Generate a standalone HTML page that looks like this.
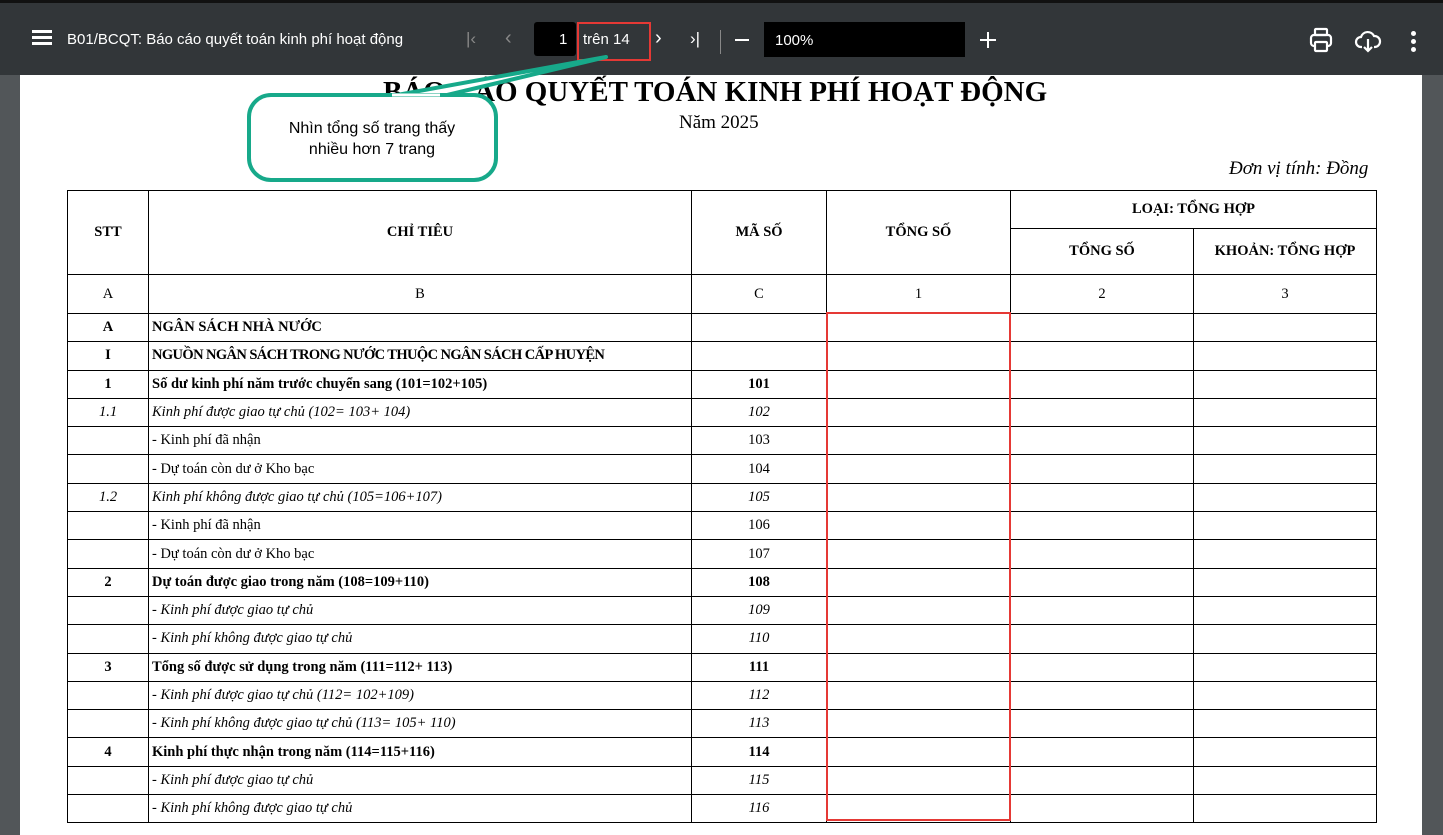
<!DOCTYPE html>
<html><head><meta charset="utf-8"><style>
*{margin:0;padding:0;box-sizing:border-box}
body{width:1443px;height:823px;overflow:hidden;background:#525659;position:relative;font-family:"Liberation Serif",serif}
#bar{position:absolute;left:0;top:0;width:1443px;height:75px;background:#323639;border-top:3px solid #111;color:#fff;font-family:"Liberation Sans",sans-serif}
#page{position:absolute;left:20px;top:75px;width:1402px;height:760px;background:#fff}
.t{position:absolute;white-space:nowrap}
table{position:absolute;left:67px;top:190px;border-collapse:collapse;font-size:14.5px}
td{border:1px solid #000;padding:0 3px;height:28.3px;white-space:nowrap}
.c{text-align:center}.b{font-weight:bold}.i{font-style:italic}
</style></head><body>
<div id="bar">
 <div class="t" style="left:32px;top:27px;width:20px;height:3px;background:#fff;box-shadow:0 6px 0 #fff,0 12px 0 #fff"></div>
 <div class="t" style="left:67px;top:28px;font-size:15px">B01/BCQT: Báo cáo quyết toán kinh phí hoạt động</div>
 <div class="t" style="left:466px;top:26px;font-size:17px;color:#888">|&lsaquo;</div>
 <div class="t" style="left:505px;top:24px;font-size:20px;color:#888">&lsaquo;</div>
 <div class="t" style="left:534px;top:19px;width:42px;height:34px;background:#000;border-radius:3px"></div>
 <div class="t" style="left:559px;top:28px;font-size:15px">1</div>
 <div class="t" style="left:583px;top:28px;font-size:15px">trên 14</div>
 <div class="t" style="left:577px;top:19px;width:74px;height:39px;border:2px solid #e53935"></div>
 <div class="t" style="left:655px;top:24px;font-size:20px">&rsaquo;</div>
 <div class="t" style="left:690px;top:26px;font-size:17px">&rsaquo;|</div>
 <div class="t" style="left:720px;top:27px;width:1px;height:24px;background:#888"></div>
 <div class="t" style="left:735px;top:36px;width:14px;height:2px;background:#fff"></div>
 <div class="t" style="left:764px;top:19px;width:201px;height:35px;background:#000"></div>
 <div class="t" style="left:775px;top:29px;font-size:15px">100%</div>
 <div class="t" style="left:980px;top:36px;width:16px;height:2px;background:#fff"></div>
 <div class="t" style="left:987px;top:29px;width:2px;height:16px;background:#fff"></div>
 <svg class="t" style="left:1309px;top:24px" width="24" height="28" viewBox="0 0 24 28" fill="none" stroke="#fff" stroke-width="2.2"><rect x="6" y="2" width="12" height="6" rx="1"/><rect x="2" y="8" width="20" height="11" rx="3"/><rect x="6" y="15" width="12" height="9" rx="1" fill="#323639"/></svg>
 <svg class="t" style="left:1354px;top:25px" width="28" height="26" viewBox="0 0 28 26" fill="none" stroke="#fff" stroke-width="2.2"><path d="M8 19H7a5 5 0 0 1 0-10 7 7 0 0 1 13-1 5 5 0 0 1 1 11h-1"/><path d="M14 11v12M10 19l4 4 4-4"/></svg>
 <div class="t" style="left:1411px;top:28px;width:5px;height:5px;border-radius:50%;background:#fff;box-shadow:0 8px 0 #fff,0 16px 0 #fff"></div>
</div>
<div id="page"></div>
<div class="t" style="left:383px;top:76px;font-size:29px;font-weight:bold">BÁO CÁO QUYẾT TOÁN KINH PHÍ HOẠT ĐỘNG</div>
<div class="t" style="left:679px;top:112px;font-size:19px">Năm 2025</div>
<div class="t" style="left:1229px;top:158px;font-size:19px;font-style:italic">Đơn vị tính: Đồng</div>
<table>
<colgroup><col style="width:81px"><col style="width:543px"><col style="width:135px"><col style="width:184px"><col style="width:183px"><col style="width:183px"></colgroup>
<tr><td rowspan="2" class="c b" style="height:84px">STT</td><td rowspan="2" class="c b">CHỈ TIÊU</td><td rowspan="2" class="c b">MÃ SỐ</td><td rowspan="2" class="c b">TỔNG SỐ</td><td colspan="2" class="c b" style="height:38px">LOẠI: TỔNG HỢP</td></tr>
<tr><td class="c b" style="height:46px">TỔNG SỐ</td><td class="c b">KHOẢN: TỔNG HỢP</td></tr>
<tr><td class="c" style="height:39px">A</td><td class="c">B</td><td class="c">C</td><td class="c">1</td><td class="c">2</td><td class="c">3</td></tr>
<tr class="b"><td class="c">A</td><td>NGÂN SÁCH NHÀ NƯỚC</td><td></td><td></td><td></td><td></td></tr>
<tr class="b"><td class="c">I</td><td style="letter-spacing:-0.6px">NGUỒN NGÂN SÁCH TRONG NƯỚC THUỘC NGÂN SÁCH CẤP HUYỆN</td><td></td><td></td><td></td><td></td></tr>
<tr class="b"><td class="c">1</td><td>Số dư kinh phí năm trước chuyển sang (101=102+105)</td><td class="c">101</td><td></td><td></td><td></td></tr>
<tr class="i"><td class="c">1.1</td><td>Kinh phí được giao tự chủ (102= 103+ 104)</td><td class="c">102</td><td></td><td></td><td></td></tr>
<tr><td></td><td>- Kinh phí đã nhận</td><td class="c">103</td><td></td><td></td><td></td></tr>
<tr><td></td><td>- Dự toán còn dư ở Kho bạc</td><td class="c">104</td><td></td><td></td><td></td></tr>
<tr class="i"><td class="c">1.2</td><td>Kinh phí không được giao tự chủ (105=106+107)</td><td class="c">105</td><td></td><td></td><td></td></tr>
<tr><td></td><td>- Kinh phí đã nhận</td><td class="c">106</td><td></td><td></td><td></td></tr>
<tr><td></td><td>- Dự toán còn dư ở Kho bạc</td><td class="c">107</td><td></td><td></td><td></td></tr>
<tr class="b"><td class="c">2</td><td>Dự toán được giao trong năm (108=109+110)</td><td class="c">108</td><td></td><td></td><td></td></tr>
<tr class="i"><td></td><td>- Kinh phí được giao tự chủ</td><td class="c">109</td><td></td><td></td><td></td></tr>
<tr class="i"><td></td><td>- Kinh phí không được giao tự chủ</td><td class="c">110</td><td></td><td></td><td></td></tr>
<tr class="b"><td class="c">3</td><td>Tổng số được sử dụng trong năm (111=112+ 113)</td><td class="c">111</td><td></td><td></td><td></td></tr>
<tr class="i"><td></td><td>- Kinh phí được giao tự chủ (112= 102+109)</td><td class="c">112</td><td></td><td></td><td></td></tr>
<tr class="i"><td></td><td>- Kinh phí không được giao tự chủ (113= 105+ 110)</td><td class="c">113</td><td></td><td></td><td></td></tr>
<tr class="b"><td class="c">4</td><td>Kinh phí thực nhận trong năm (114=115+116)</td><td class="c">114</td><td></td><td></td><td></td></tr>
<tr class="i"><td></td><td>- Kinh phí được giao tự chủ</td><td class="c">115</td><td></td><td></td><td></td></tr>
<tr class="i"><td></td><td>- Kinh phí không được giao tự chủ</td><td class="c">116</td><td></td><td></td><td></td></tr>
</table>
<div class="t" style="left:826px;top:312px;width:185px;height:509px;border:2px solid #e53935"></div>
<svg class="t" style="left:0;top:0" width="1443" height="823">
 <path d="M300 96 L386 96 L606 57 L443 96 Z" fill="#fff" stroke="none"/>
 <path d="M386 97 L606 57 L443 96" fill="none" stroke="#17a98a" stroke-width="4" stroke-linejoin="round"/>
 <rect x="249" y="95" width="247" height="85" rx="22" fill="#fff" stroke="#17a98a" stroke-width="4"/>
 <path d="M392 95 L440 95" stroke="#fff" stroke-width="3"/>
 <text x="372" y="133" text-anchor="middle" font-family="Liberation Sans" font-size="16" fill="#000">Nhìn tổng số trang thấy</text>
 <text x="372" y="154" text-anchor="middle" font-family="Liberation Sans" font-size="16" fill="#000">nhiều hơn 7 trang</text>
</svg>
</body></html>
